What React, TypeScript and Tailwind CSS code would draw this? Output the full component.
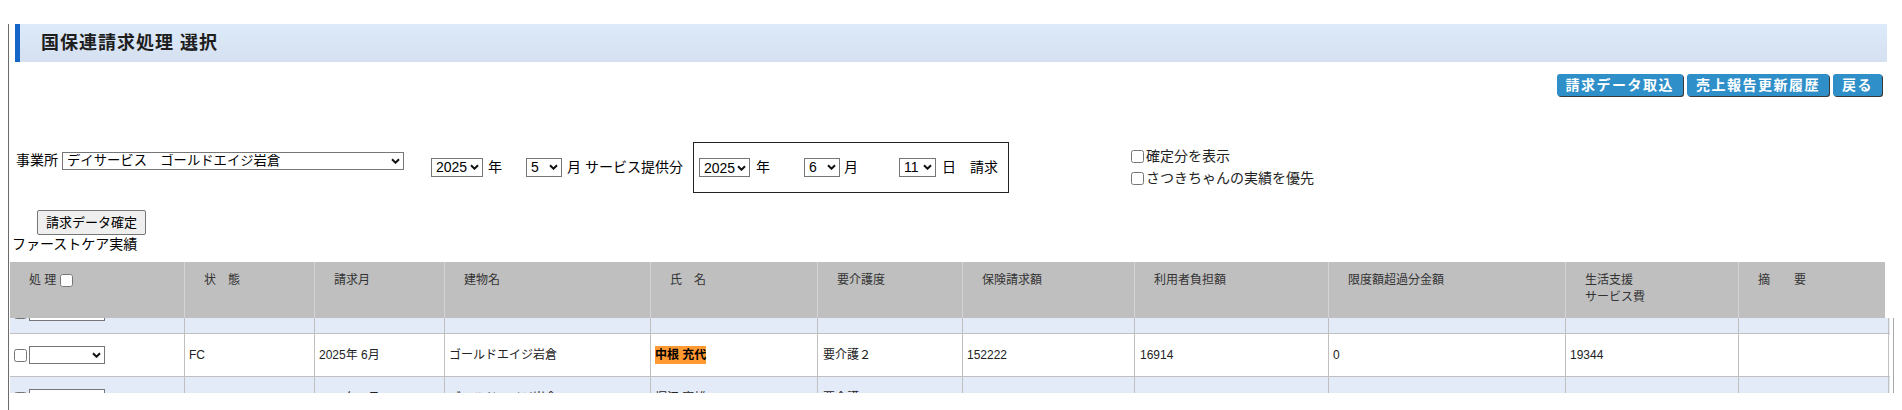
import { useEffect, useRef } from "react";

type Row = {
  status: string;
  month: string;
  building: string;
  name: string;
  care: string;
  insurance: string;
  burden: string;
  excess: string;
  support: string;
  highlight?: boolean;
};

const rows: Row[] = [
  { status: "FC", month: "2025年 6月", building: "ゴールドエイジ岩倉", name: "山田 花子", care: "要介護１", insurance: "148820", burden: "16536", excess: "0", support: "18912" },
  { status: "FC", month: "2025年 6月", building: "ゴールドエイジ岩倉", name: "中根 充代", care: "要介護２", insurance: "152222", burden: "16914", excess: "0", support: "19344", highlight: true },
  { status: "FC", month: "2025年 6月", building: "ゴールドエイジ岩倉", name: "堀江 富雄", care: "要介護１", insurance: "150445", burden: "14045", excess: "0", support: "19334" },
];

const headCols =
  "grid grid-cols-[175px_130px_130px_206px_167px_145px_172px_194px_237px_173px_146px]";
const bodyCols =
  "grid grid-cols-[175px_130px_130px_206px_167px_145px_172px_194px_237px_173px_150px]";

function Chevron() {
  return (
    <svg width="9" height="6" viewBox="0 0 9 6" className="pointer-events-none absolute right-[4px] top-1/2 -translate-y-1/2">
      <path d="M1 1.2 L4.5 4.7 L8 1.2" fill="none" stroke="#111" strokeWidth="2" />
    </svg>
  );
}

function Sel({ className, value }: { className: string; value: string }) {
  return (
    <span className="relative inline-flex">
      <select
        defaultValue={value}
        className={`appearance-none rounded-none border border-[#767676] bg-white pl-[4px] leading-none text-black outline-none ${className}`}
      >
        <option value={value}>{value}</option>
      </select>
      <Chevron />
    </span>
  );
}

const headCell = "h-[56px] border-r border-[#d4d4d4] pl-[19px] pt-[10px] text-[12px] leading-[17px] text-[#333]";
const bodyCell = "flex items-center border-r border-[#c0c0c0] pl-[4px]";

export default function App() {
  const scrollRef = useRef<HTMLDivElement>(null);

  useEffect(() => {
    if (scrollRef.current) scrollRef.current.scrollTop = 27;
  }, []);

  return (
    <div className="bg-white pl-[8px] pt-[8px] font-['Liberation_Sans','Noto_Sans_CJK_JP',sans-serif] text-black">
      <div className="min-h-[402px] border-l border-[#6b6b6b]">
        {/* title */}
        <div className="ml-[6px] mr-[15px] mt-[16px] flex h-[38px] items-center border-l-[5px] border-[#1565c8] bg-gradient-to-b from-[#dceaf9] to-[#d5e0f0] pl-[21px]">
          <h1 className="text-[18px] font-bold tracking-[1px] text-[#1e1e1e]">国保連請求処理 選択</h1>
        </div>

        {/* action buttons */}
        <div className="mt-[12px] flex justify-end gap-[4px] pr-[20px]">
          {["請求データ取込", "売上報告更新履歴", "戻る"].map((b) => (
            <button
              key={b}
              className="h-[22px] rounded-[3px] bg-[#2f8fc9] px-[9px] text-[14px] font-bold leading-none tracking-[1.5px] text-white shadow-[1px_1px_0_#3a3a3a]"
            >
              {b}
            </button>
          ))}
        </div>

        {/* filters */}
        <div className="mt-[46px] flex h-[51px] items-center text-[14px]">
          <div className="mb-[14px] ml-[7px] flex items-center">
            <span>事業所</span>
            <span className="ml-[4px]">
              <Sel className="h-[18px] w-[342px] text-[13.33px]" value="デイサービス　ゴールドエイジ岩倉" />
            </span>
          </div>
          <span className="ml-[27px]">
            <Sel className="h-[19px] w-[52px] text-[14px]" value="2025" />
          </span>
          <span className="ml-[5px]">年</span>
          <span className="ml-[24px]">
            <Sel className="h-[19px] w-[36px] text-[14px]" value="5" />
          </span>
          <span className="ml-[5px]">月 サービス提供分</span>

          <div className="ml-[10px] flex h-[51px] w-[316px] items-center border border-[#222] pl-[5px]">
            <Sel className="h-[19px] w-[51px] text-[14px]" value="2025" />
            <span className="ml-[6px]">年</span>
            <span className="ml-[34px]">
              <Sel className="h-[19px] w-[36px] text-[14px]" value="6" />
            </span>
            <span className="ml-[4px]">月</span>
            <span className="ml-[41px]">
              <Sel className="h-[19px] w-[37px] text-[14px]" value="11" />
            </span>
            <span className="ml-[6px]">日　請求</span>
          </div>

          <div className="ml-[122px] flex flex-col gap-[9px] text-[#222]">
            <label className="flex items-center leading-[13px]">
              <input type="checkbox" className="m-0 mr-[2px] h-[13px] w-[13px]" />
              確定分を表示
            </label>
            <label className="flex items-center leading-[13px]">
              <input type="checkbox" className="m-0 mr-[2px] h-[13px] w-[13px]" />
              さつきちゃんの実績を優先
            </label>
          </div>
        </div>

        <button className="ml-[28px] mt-[17px] h-[25px] w-[109px] rounded-[2px] border border-[#767676] bg-[#efefef] text-[13px] leading-none">
          請求データ確定
        </button>
        <div className="ml-[3px] mt-[1px] text-[14px] leading-[17px]">ファーストケア実績</div>

        {/* table header */}
        <div className={`${headCols} ml-[1px] mt-[9px] w-[1875px] bg-[#bfbfbf]`}>
          <div className={`${headCell} flex items-start`}>
            <span>処 理</span>
            <input type="checkbox" className="m-0 ml-[4px] mt-[2px] h-[13px] w-[13px]" />
          </div>
          <div className={headCell}>状　態</div>
          <div className={headCell}>請求月</div>
          <div className={headCell}>建物名</div>
          <div className={headCell}>氏　名</div>
          <div className={headCell}>要介護度</div>
          <div className={headCell}>保険請求額</div>
          <div className={headCell}>利用者負担額</div>
          <div className={headCell}>限度額超過分金額</div>
          <div className={headCell}>
            生活支援
            <br />
            サービス費
          </div>
          <div className={`${headCell} border-r-0`}>摘　　要</div>
        </div>

        {/* table body (scrolled) */}
        <div ref={scrollRef} className="ml-[1px] h-[75px] w-[1884px] overflow-hidden border-r border-[#a8a8a8]">
          {rows.map((r, i) => (
            <div
              key={i}
              className={`${bodyCols} h-[43px] w-[1880px] border-b border-[#c0c0c0] text-[12px] text-[#222] ${
                i % 2 === 1 ? "bg-white" : "bg-[#e3ebf8]"
              }`}
            >
              <div className={bodyCell}>
                <input type="checkbox" className="m-0 h-[13px] w-[13px]" />
                <span className="ml-[2px]">
                  <Sel className="h-[18px] w-[76px] text-[13.33px]" value="" />
                </span>
              </div>
              <div className={bodyCell}>{r.status}</div>
              <div className={bodyCell}>{r.month}</div>
              <div className={bodyCell}>{r.building}</div>
              <div className={`${bodyCell} pl-[3px]`}>
                {r.highlight ? (
                  <span className="bg-[#ff9a33] font-bold text-black">{r.name}</span>
                ) : (
                  r.name
                )}
              </div>
              <div className={`${bodyCell} pl-[5px]`}>{r.care}</div>
              <div className={bodyCell}>{r.insurance}</div>
              <div className={`${bodyCell} pl-[5px]`}>{r.burden}</div>
              <div className={bodyCell}>{r.excess}</div>
              <div className={bodyCell}>{r.support}</div>
              <div className={bodyCell}></div>
            </div>
          ))}
        </div>
      </div>
    </div>
  );
}
